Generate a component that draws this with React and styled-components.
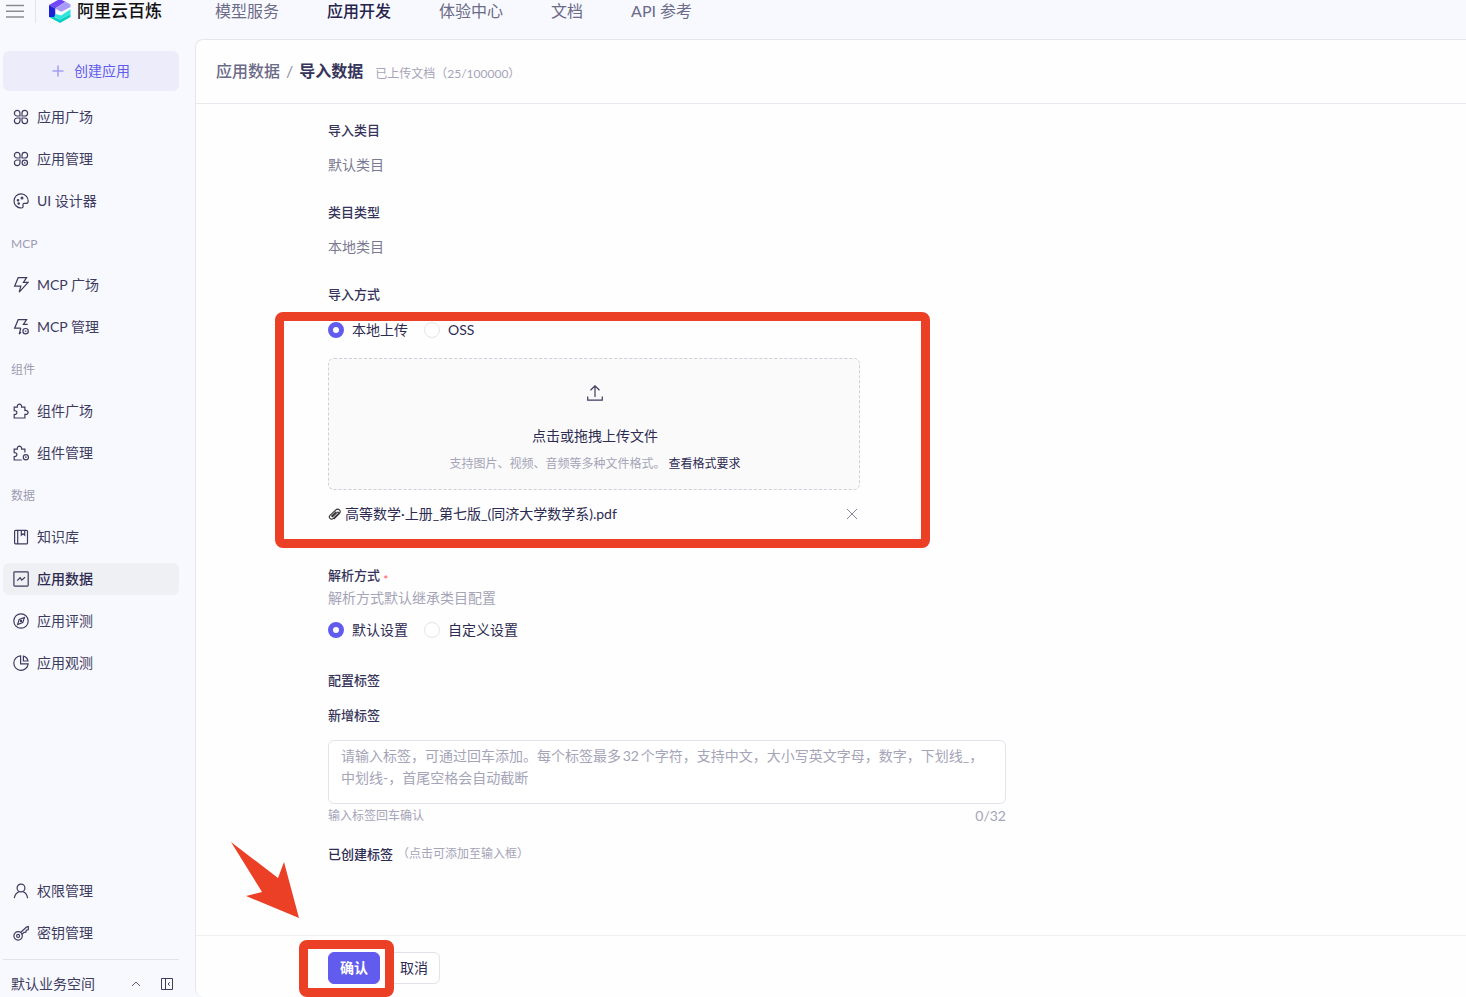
import React, { useState } from 'react';
import styled, { createGlobalStyle } from 'styled-components';

const ICONS = {
  apps: (
    <>
      <path d="M7 7H4.2A2.8 2.8 0 1 1 7 4.2Z" />
      <path d="M9 7h2.8A2.8 2.8 0 1 0 9 4.2Z" />
      <path d="M7 9H4.2A2.8 2.8 0 1 0 7 11.8Z" />
      <path d="M9 9h2.8A2.8 2.8 0 1 1 9 11.8Z" />
    </>
  ),
  appsManage: (
    <>
      <path d="M7 7H4.2A2.8 2.8 0 1 1 7 4.2Z" />
      <path d="M9 7h2.8A2.8 2.8 0 1 0 9 4.2Z" />
      <path d="M7 9H4.2A2.8 2.8 0 1 0 7 11.8Z" />
      <circle cx="11.8" cy="11.8" r="2.7" />
      <path d="M11 11.8h1.6" />
    </>
  ),
  palette: (
    <>
      <path d="M8.3 15A7.1 7.1 0 1 1 15.2 8.2c0 1.5-.9 2.2-2.2 2.2h-1.7c-1.2 0-1.7.9-1.3 1.9.5 1.3-.2 2.7-1.7 2.7Z" />
      <circle cx="5" cy="7.2" r=".7" />
      <circle cx="9" cy="5" r=".9" />
      <circle cx="5.7" cy="10.5" r=".7" />
    </>
  ),
  bolt: <path d="M5.2.7h8.4L10.4 5.4h4.7L6.2 15.2 7.8 9.2H1.6L5.2.7Z" />,
  boltManage: (
    <>
      <path d="M7.8 9.2H1.6L5.2.7h8.4L10.4 5.4h4.3M7.8 9.2 6.2 15.2l1.8-2" />
      <circle cx="12.6" cy="12.2" r="2.7" />
      <path d="M11.8 12.2h1.6" />
    </>
  ),
  puzzle: (
    <path d="M1.2 4.2H4.3C3.8.1 9.1.1 8.6 4.2h3.3v3.3c4.3-.5 4.3 4.4 0 3.9V15H1.2v-3.4c3.6.3 3.6-4.3 0-4Z" />
  ),
  puzzleManage: (
    <>
      <path d="M8.8 15H1.2v-3.4c3.6.3 3.6-4.3 0-4V4.2H4.3C3.8.1 9.1.1 8.6 4.2h3.3v3.3" />
      <circle cx="12.9" cy="12.2" r="2.6" />
      <path d="M12.1 12.2h1.6" />
    </>
  ),
  book: (
    <>
      <rect x="1.6" y="1.3" width="12.9" height="13.6" rx="1" />
      <path d="M4.7 1.3v13.6M8.3 1.3v5L10 4.9l1.7 1.4v-5" />
    </>
  ),
  chart: (
    <>
      <rect x=".9" y=".9" width="14.3" height="14.2" rx=".8" />
      <path d="m4.2 9.7 2.9-3 1.6 2.4L12 6.2" />
    </>
  ),
  compass: (
    <>
      <circle cx="8" cy="8" r="7.2" />
      <path d="m11.4 4.5-1.6 5-5.2 2 1.6-5.1 5.2-1.9Z" />
      <circle cx="8" cy="8" r=".6" />
    </>
  ),
  pie: (
    <>
      <path d="M7.6.9A7.2 7.2 0 1 0 15.2 8.8H7.6V.9Z" />
      <path d="M10.4 1.2c2.5.6 4 2.2 4.6 4.8h-4.6V1.2Z" />
    </>
  ),
  user: (
    <>
      <circle cx="8" cy="5" r="3.9" />
      <path d="M1.3 15.2c.5-3.3 2-5.4 4.7-6.5M10.3 8.9c2.5 1 3.9 3.2 4.3 6.3" />
    </>
  ),
  key: (
    <>
      <circle cx="5.1" cy="10.9" r="4.2" />
      <circle cx="5.1" cy="10.9" r="1.5" />
      <path d="m7.6 7.5 5.8-5.4 1.9-.5v3.2l-2 .3-.4 2-1.9.3-2.3 2.2" />
    </>
  ),
};

const mainMenu = [
  { label: '应用广场', icon: 'apps' },
  { label: '应用管理', icon: 'appsManage' },
  { label: 'UI 设计器', icon: 'palette' },
  { title: 'MCP' },
  { label: 'MCP 广场', icon: 'bolt' },
  { label: 'MCP 管理', icon: 'boltManage' },
  { title: '组件' },
  { label: '组件广场', icon: 'puzzle' },
  { label: '组件管理', icon: 'puzzleManage' },
  { title: '数据' },
  { label: '知识库', icon: 'book' },
  { label: '应用数据', icon: 'chart', active: true },
  { label: '应用评测', icon: 'compass' },
  { label: '应用观测', icon: 'pie' },
];

const bottomMenu = [
  { label: '权限管理', icon: 'user' },
  { label: '密钥管理', icon: 'key' },
];

const navLinks = ['模型服务', '应用开发', '体验中心', '文档', 'API 参考'];

const Icon = ({ name }) => (
  <IconSvg viewBox="0 0 16 16" aria-hidden="true">{ICONS[name]}</IconSvg>
);

const Logo = () => (
  <svg width="22" height="24" viewBox="0 0 22 24" aria-hidden="true">
    <path d="M0 6 10.7 0 16.5 2.8 6 9.6Z" fill="#7247f5" />
    <path d="M6 9.6 16.5 2.8 21.5 5.6V8.2L12 13 6.5 10Z" fill="#a79bf7" />
    <path d="M0 6 6.5 9.8V14.8L5.5 18H0Z" fill="#1b22d8" />
    <path d="M6.5 9.8 12.5 13 21.5 8.2V10.5L12 16 6.5 14.8Z" fill="#fff" />
    <path d="M21.5 10.2V15.2L11 20.5 5.5 17.5 6.5 15 12 16.5Z" fill="#2fe6da" />
    <path d="M0 18H5.5L11 20.5 21.5 15.2V18L11 24Z" fill="#08cfc6" />
  </svg>
);

const Menu = ({ items }) => (
  <MenuList>
    {items.map((item) => (
      <li key={item.label || item.title}>
        {item.title ? (
          <MenuTitle>{item.title}</MenuTitle>
        ) : (
          <MenuLink href="#" $active={item.active}>
            <Icon name={item.icon} />
            {item.label}
          </MenuLink>
        )}
      </li>
    ))}
  </MenuList>
);

const RadioGroup = ({ name, label, options, value, onChange }) => (
  <Radios role="radiogroup" aria-label={label}>
    {options.map((option) => (
      <RadioLabel key={option}>
        <Radio type="radio" name={name} checked={value === option} onChange={() => onChange(option)} />
        {option}
      </RadioLabel>
    ))}
  </Radios>
);

export default function App() {
  const [source, setSource] = useState('本地上传');
  const [parser, setParser] = useState('默认设置');
  const [tag, setTag] = useState('');
  const [files, setFiles] = useState(['高等数学·上册_第七版_(同济大学数学系).pdf']);

  const handleRemove = (file) => setFiles(files.filter((f) => f !== file));

  return (
    <>
      <GlobalStyle />
      <Page>
        <TopBar>
          <Brand>
            <MenuToggle type="button" aria-label="菜单">
              <svg width="18" height="14" viewBox="0 0 18 14" stroke="#8b8b90" strokeWidth="1.5">
                <path d="M0 1.5h18M0 7.2h18M0 13h18" />
              </svg>
            </MenuToggle>
            <BrandLink href="#">
              <Logo />
              阿里云百炼
            </BrandLink>
          </Brand>
          <Nav>
            {navLinks.map((link) => (
              <NavLink key={link} href="#" $active={link === '应用开发'}>{link}</NavLink>
            ))}
          </Nav>
        </TopBar>

        <Sidebar>
          <CreateButton type="button">
            <svg width="12" height="12" viewBox="0 0 12 12" stroke="#a29ef2" strokeWidth="1.5" aria-hidden="true">
              <path d="M6 .5v11M.5 6h11" />
            </svg>
            创建应用
          </CreateButton>
          <Menu items={mainMenu} />
          <Spacer />
          <Menu items={bottomMenu} />
          <Workspace>
            <WorkspaceButton type="button">
              默认业务空间
              <svg width="10" height="6" viewBox="0 0 10 6" fill="none" stroke="#5c5b78" aria-hidden="true">
                <path d="m1 5 4-4 4 4" />
              </svg>
            </WorkspaceButton>
            <CollapseButton type="button" aria-label="收起侧栏">
              <svg width="12" height="12" viewBox="0 0 12 12" fill="none" stroke="#3d3b5e" aria-hidden="true">
                <path d="M.5.5h11v11H.5ZM4.5.5v11M8.8 4.2 7 6l1.8 1.8" />
              </svg>
            </CollapseButton>
          </Workspace>
        </Sidebar>

        <Panel>
          <PanelHeader>
            <Crumb href="#">应用数据</Crumb>
            <Slash>/</Slash>
            <Title>导入数据</Title>
            <Count>已上传文档（25/100000）</Count>
          </PanelHeader>

          <Form>
            <Field>
              <Label>导入类目</Label>
              <Value>默认类目</Value>
            </Field>
            <Field>
              <Label>类目类型</Label>
              <Value>本地类目</Value>
            </Field>
            <Field>
              <Label>导入方式</Label>
              <UploadBlock>
                <RadioGroup
                  name="source"
                  label="导入方式"
                  options={['本地上传', 'OSS']}
                  value={source}
                  onChange={setSource}
                />
                <Dropzone>
                  <FileInput id="file" type="file" />
                  <DropLabel htmlFor="file">
                    <svg width="16" height="16" viewBox="0 0 16 16" fill="none" stroke="#3d3b5e" strokeWidth="1.2" aria-hidden="true">
                      <path d="M8 12V1M3.5 5.3 8 .9l4.5 4.4M.7 11.5v3.7h14.6v-3.7" />
                    </svg>
                    点击或拖拽上传文件
                  </DropLabel>
                  <DropHint>
                    支持图片、视频、音频等多种文件格式。
                    <a href="#">查看格式要求</a>
                  </DropHint>
                </Dropzone>
                {files.map((file) => (
                  <FileRow key={file}>
                    <svg width="13" height="13" viewBox="0 0 13 13" fill="none" stroke="#333" strokeWidth="1.1" aria-hidden="true">
                      <path d="m4.2 9 5-4.6c1-1 2.2.3 1.2 1.3l-5 4.6C3 12.5 0 9.5 2 7.3L7.300 2.300c3.200-2.900 6.400.6 4 3.400L5.800 11M3.200 8.400l5-4.700" />
                    </svg>
                    <span>{file}</span>
                    <RemoveButton type="button" aria-label="删除文件" onClick={() => handleRemove(file)}>
                      <svg width="12" height="12" viewBox="0 0 12 12" stroke="#8685a0" aria-hidden="true">
                        <path d="m1 1 10 10M11 1 1 11" />
                      </svg>
                    </RemoveButton>
                  </FileRow>
                ))}
                <UploadMark />
              </UploadBlock>
            </Field>

            <ParserField>
              <Label>解析方式 <Required>*</Required></Label>
              <Hint>解析方式默认继承类目配置</Hint>
              <RadioGroup
                name="parser"
                label="解析方式"
                options={['默认设置', '自定义设置']}
                value={parser}
                onChange={setParser}
              />
            </ParserField>

            <TagField>
              <Label>配置标签</Label>
              <Label as="label" htmlFor="tag">新增标签</Label>
              <TagInput
                id="tag"
                value={tag}
                maxLength={32}
                onChange={(e) => setTag(e.target.value)}
                placeholder="请输入标签，可通过回车添加。每个标签最多32个字符，支持中文，大小写英文字母，数字，下划线_，中划线-，首尾空格会自动截断"
              />
            </TagField>
            <TagFooter>
              <span>输入标签回车确认</span>
              <Counter>{tag.length}/32</Counter>
            </TagFooter>
            <Created>
              已创建标签
              <small>（点击可添加至输入框）</small>
            </Created>
          </Form>

          <PanelFooter>
            <ConfirmBlock>
              <Button type="button" $primary>确认</Button>
              <ConfirmMark />
              <Arrow viewBox="0 0 68 76" aria-hidden="true">
                <path d="M0 0 47 36 53 20 68 76 15 54 31 50Z" fill="#eb4025" />
              </Arrow>
            </ConfirmBlock>
            <Button type="button">取消</Button>
          </PanelFooter>
        </Panel>
      </Page>
    </>
  );
}

const GlobalStyle = createGlobalStyle`
  *, *::before, *::after {
    box-sizing: border-box;
  }

  body {
    margin: 0;
    background: #f8f9fe;
    color: #2d2b52;
    font-family: Lato, "Noto Sans CJK SC", sans-serif;
    font-size: 14px;
    line-height: 22px;
  }

  button, input, textarea {
    font: inherit;
    color: inherit;
  }

  button {
    cursor: pointer;
  }

  a {
    color: inherit;
    text-decoration: none;
  }
`;

const Page = styled.div`
  display: grid;
  grid-template-columns: 195px 1fr;
  grid-template-rows: auto 1fr;
  min-height: 100vh;
`;

const TopBar = styled.header`
  grid-column: 1 / -1;
  display: flex;
  height: 39px;
`;

const Brand = styled.div`
  display: flex;
  align-items: center;
  width: 215px;
  height: 22px;
`;

const MenuToggle = styled.button`
  display: flex;
  align-items: center;
  width: 36px;
  height: 24px;
  padding: 0 0 0 6px;
  border: 0;
  border-right: 1px solid #e4e4ec;
  background: none;
`;

const BrandLink = styled.a`
  display: flex;
  align-items: center;
  gap: 6px;
  margin-left: 13px;
  color: #111;
  font-size: 17px;
  font-weight: 500;
`;

const Nav = styled.nav`
  display: flex;
  gap: 48px;
  font-size: 16px;
`;

const NavLink = styled.a`
  height: 22px;
  color: ${(props) => (props.$active ? '#26244c' : '#6b6a88')};
  font-weight: ${(props) => (props.$active ? 500 : 400)};
`;

const Sidebar = styled.aside`
  display: flex;
  flex-direction: column;
  gap: 10px;
  padding: 12px 16px 1px 3px;
`;

const CreateButton = styled.button`
  display: flex;
  align-items: center;
  justify-content: center;
  gap: 10px;
  height: 40px;
  border: 0;
  border-radius: 6px;
  background: #edecfa;
  color: #615ced;
`;

const MenuList = styled.ul`
  display: flex;
  flex-direction: column;
  gap: 10px;
  margin: 0;
  padding: 0;
  list-style: none;
`;

const MenuLink = styled.a`
  display: flex;
  align-items: center;
  gap: 8px;
  height: 32px;
  padding: 0 10px 1px;
  border-radius: 6px;
  background: ${(props) => (props.$active ? '#eff0f4' : 'transparent')};
  color: ${(props) => (props.$active ? '#2d2b52' : '#3d3b5e')};
  font-weight: ${(props) => (props.$active ? 500 : 400)};
`;

const MenuTitle = styled.div`
  height: 32px;
  padding: 0 8px;
  color: #9d9cb2;
  font-size: 12px;
  line-height: 34px;
`;

const IconSvg = styled.svg`
  width: 16px;
  height: 16px;
  fill: none;
  stroke: #3d3b5e;
  stroke-width: 1.2;
`;

const Spacer = styled.div`
  flex: 1;
`;

const Workspace = styled.div`
  display: flex;
  align-items: center;
  justify-content: space-between;
  padding: 12px 6px 0 8px;
  border-top: 1px solid #e2e3ea;
`;

const WorkspaceButton = styled.button`
  display: flex;
  align-items: center;
  justify-content: space-between;
  width: 130px;
  height: 24px;
  padding: 0;
  border: 0;
  background: none;
  color: #3d3b5e;
`;

const CollapseButton = styled.button`
  display: flex;
  padding: 0;
  border: 0;
  background: none;
`;

const Panel = styled.main`
  display: flex;
  flex-direction: column;
  border: 1px solid #e6e6ed;
  border-width: 1px 0 0 1px;
  border-radius: 8px 0 0 8px;
  background: #fefefe;
`;

const PanelHeader = styled.div`
  display: flex;
  align-items: center;
  height: 64px;
  padding: 0 20px 2px;
  border-bottom: 1px solid #e8e8ee;
`;

const Crumb = styled.a`
  color: #6b6a88;
  font-size: 16px;
  font-weight: 500;
`;

const Slash = styled.span`
  padding: 0 6px;
  color: #8f8ea6;
  font-size: 16px;
`;

const Title = styled.h1`
  margin: 0;
  color: #36345a;
  font-size: 16px;
  font-weight: 700;
`;

const Count = styled.span`
  padding: 6px 0 0 12px;
  color: #a5a4ba;
  font-size: 12px;
`;

const Form = styled.form`
  flex: 1;
  padding: 16px 132px 0;
`;

const Field = styled.div`
  display: flex;
  flex-direction: column;
  gap: 14px;
  margin-bottom: 26px;
`;

const Label = styled.div`
  color: #36345a;
  font-size: 13px;
  font-weight: 500;
  line-height: 20px;
`;

const Value = styled.div`
  color: #7a7992;
`;

const UploadBlock = styled.div`
  position: relative;
  width: 100%;
  max-width: 532px;
  margin-top: 1px;
`;

// 上传区域的红色标注框
const UploadMark = styled.div`
  position: absolute;
  inset: -7px -70px -23px -53px;
  border: 9px solid #eb4025;
  border-radius: 8px;
  pointer-events: none;
`;

const Radios = styled.div`
  display: flex;
  gap: 16px;
`;

const RadioLabel = styled.label`
  display: flex;
  align-items: center;
  gap: 8px;
`;

const Radio = styled.input`
  appearance: none;
  width: 16px;
  height: 16px;
  margin: 0;
  border: 1px solid #e4e4ec;
  border-radius: 50%;
  background: #fff;

  &:checked {
    border: 5px solid #615ced;
  }
`;

const Dropzone = styled.div`
  display: flex;
  flex-direction: column;
  align-items: center;
  height: 132px;
  margin-top: 17px;
  padding: 26px 0 0 2px;
  border: 1px dashed #cfcfda;
  border-radius: 6px;
  background: #fafafa;
`;

const FileInput = styled.input`
  position: absolute;
  width: 1px;
  height: 1px;
  opacity: 0;
`;

const DropLabel = styled.label`
  display: flex;
  flex-direction: column;
  align-items: center;
  gap: 24px;
`;

const DropHint = styled.div`
  display: flex;
  gap: 3px;
  margin-top: 7px;
  color: #a5a4b8;
  font-size: 12px;
  line-height: 20px;

  a {
    color: #2d2b52;
  }
`;

const FileRow = styled.div`
  display: flex;
  align-items: center;
  gap: 4px;
  margin-top: 13px;
  padding-right: 2px;
`;

const RemoveButton = styled.button`
  display: flex;
  margin-left: auto;
  padding: 0;
  border: 0;
  background: none;
`;

const ParserField = styled.div`
  display: flex;
  flex-direction: column;
  margin: 40px 0 29px;

  ${Radios} {
    margin-top: 10px;
  }
`;

const Required = styled.span`
  color: #ff5c5c;
  font-size: 12px;
  line-height: 1;
  vertical-align: sub;
`;

const Hint = styled.div`
  margin-top: 1px;
  color: #a5a4b8;
`;

const TagField = styled.div`
  display: flex;
  flex-direction: column;
  gap: 15px;
  max-width: 678px;
`;

const TagInput = styled.textarea`
  width: 100%;
  height: 64px;
  padding: 4px 12px;
  border: 1px solid #e2e2ea;
  border-radius: 6px;
  background: #fff;
  outline: none;
  resize: none;
  text-autospace: normal;

  &::placeholder {
    color: #a5a4b8;
  }
`;

const TagFooter = styled.div`
  display: flex;
  justify-content: space-between;
  max-width: 678px;
  margin-top: 1px;
  color: #a5a4b8;
  font-size: 12px;
`;

const Counter = styled.span`
  font-size: 14px;
`;

const Created = styled.div`
  display: flex;
  gap: 4px;
  margin-top: 16px;
  font-size: 13px;
  font-weight: 500;

  small {
    color: #a5a4b8;
    font-size: 12px;
    font-weight: 400;
  }
`;

const PanelFooter = styled.div`
  display: flex;
  gap: 8px;
  padding: 16px 132px 13px;
  border-top: 1px solid #f0f0f4;
`;

const ConfirmBlock = styled.div`
  position: relative;
`;

const ConfirmMark = styled.div`
  position: absolute;
  z-index: 1;
  inset: -12px -14px -13px -29px;
  border: 9px solid #eb4025;
  border-radius: 8px;
  pointer-events: none;
`;

const Arrow = styled.svg`
  position: absolute;
  top: -110px;
  left: -97px;
  width: 68px;
  height: 76px;
  pointer-events: none;
`;

const Button = styled.button`
  height: 32px;
  padding: 0 11px;
  border: 1px solid ${(props) => (props.$primary ? '#615ced' : '#e2e2ea')};
  border-radius: 6px;
  background: ${(props) => (props.$primary ? '#615ced' : '#fff')};
  color: ${(props) => (props.$primary ? '#fff' : '#2d2b52')};
  font-weight: ${(props) => (props.$primary ? 700 : 400)};
`;
